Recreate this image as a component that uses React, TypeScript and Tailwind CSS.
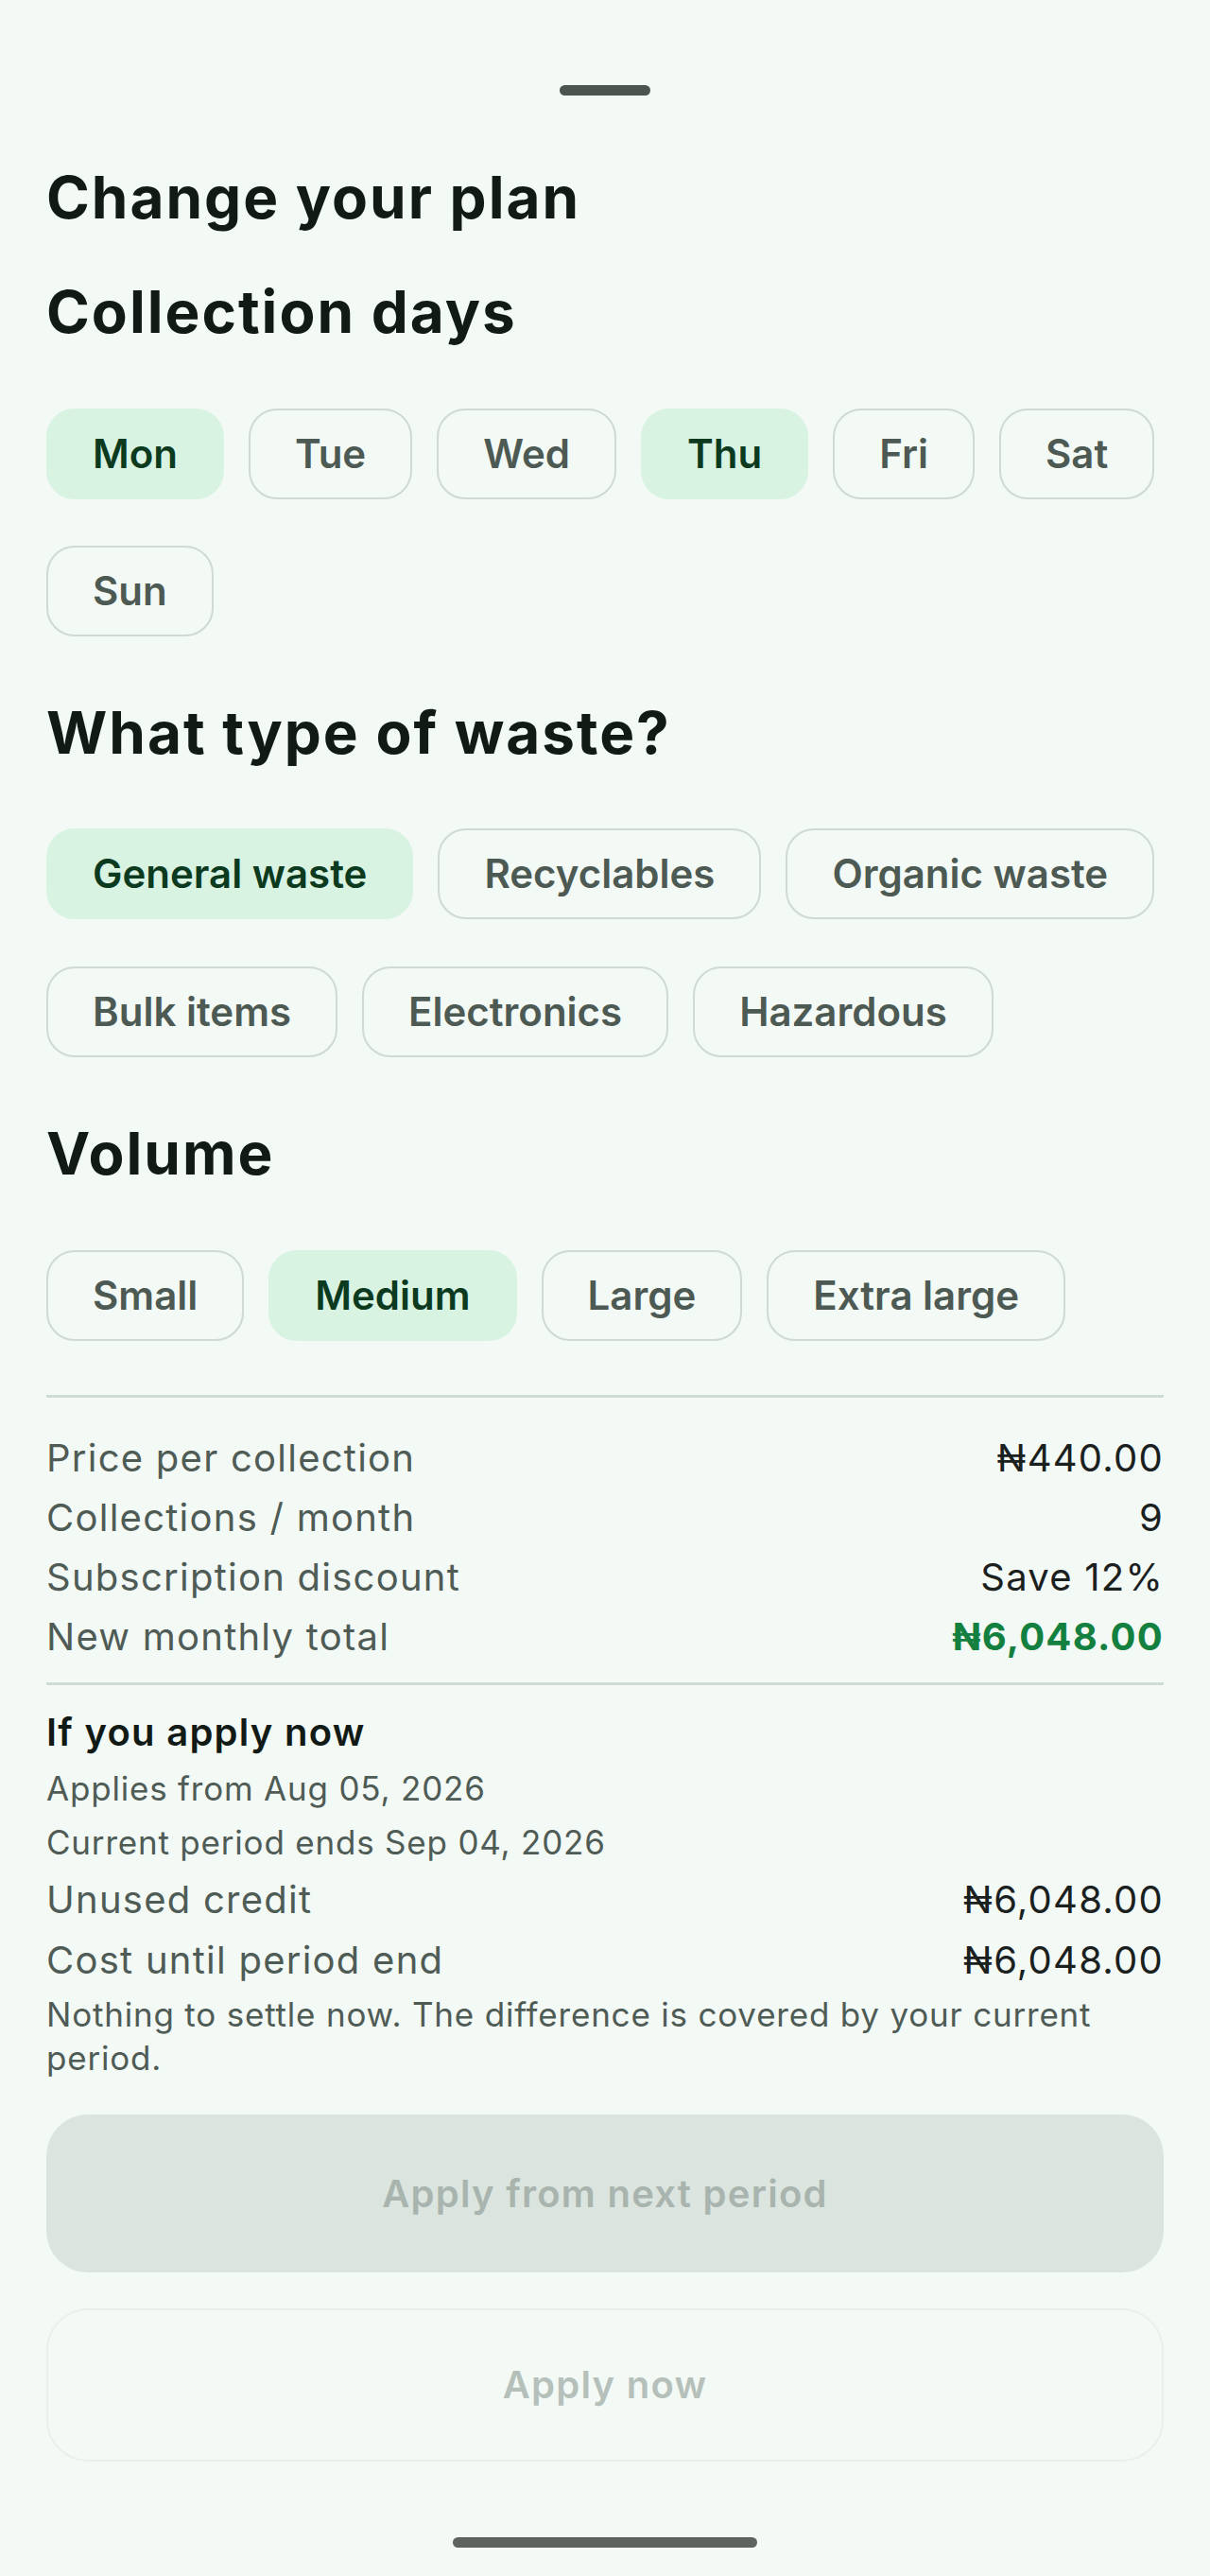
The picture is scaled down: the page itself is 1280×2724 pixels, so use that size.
import React, { useState } from 'react';

const DAYS = ['Mon', 'Tue', 'Wed', 'Thu', 'Fri', 'Sat', 'Sun'];
const WASTE = ['General waste', 'Recyclables', 'Organic waste', 'Bulk items', 'Electronics', 'Hazardous'];
const VOLUMES = ['Small', 'Medium', 'Large', 'Extra large'];

function Chip({ label, selected, onClick }: { label: string; selected: boolean; onClick: () => void }) {
  return (
    <button
      onClick={onClick}
      className={
        selected
          ? 'h-[96px] px-[47px] rounded-[30px] border-2 border-[#d9f3e3] bg-[#d9f3e3] text-[#0b3a1f] text-[42px] font-semibold leading-none flex items-center'
          : 'h-[96px] px-[47px] rounded-[30px] border-2 border-[#cfdad4] bg-transparent text-[#4d5953] text-[42px] font-semibold leading-none flex items-center'
      }
    >
      {label}
    </button>
  );
}

function Row({ label, value, strong = false }: { label: string; value: string; strong?: boolean }) {
  return (
    <div className="flex items-center justify-between text-[40px] leading-[63px] tracking-[1.25px]">
      <span className="text-[#4f5b55]">{label}</span>
      <span className={strong ? 'text-[#14803f] font-bold' : 'text-[#1a201d]'}>{value}</span>
    </div>
  );
}

export default function App() {
  const [days, setDays] = useState<string[]>(['Mon', 'Thu']);
  const [waste, setWaste] = useState<string[]>(['General waste']);
  const [volume, setVolume] = useState('Medium');

  const toggle = (list: string[], set: (v: string[]) => void, item: string) => {
    set(list.includes(item) ? list.filter(i => i !== item) : [...list, item]);
  };

  return (
    <div className="min-h-[2724px] bg-[#f3f9f5] px-[49px] flex flex-col" style={{ fontFamily: 'Inter, "Noto Sans", sans-serif' }}>
      {/* sheet handle */}
      <div className="mt-[90px] mx-auto w-[96px] h-[11px] rounded-full bg-[#4b544f]" />

      <h1 className="mt-[71px] text-[62px] leading-[74px] font-bold tracking-[2px] text-[#111a15]">Change your plan</h1>

      <h2 className="mt-[47px] text-[62px] leading-[74px] font-bold tracking-[2px] text-[#111a15]">Collection days</h2>
      <div className="mt-[65px] flex flex-wrap gap-x-[26px] gap-y-[49px]">
        {DAYS.map(d => (
          <Chip key={d} label={d} selected={days.includes(d)} onClick={() => toggle(days, setDays, d)} />
        ))}
      </div>

      <h2 className="mt-[65px] text-[62px] leading-[74px] font-bold tracking-[2px] text-[#111a15]">What type of waste?</h2>
      <div className="mt-[64px] flex flex-wrap gap-x-[26px] gap-y-[50px]">
        {WASTE.map(w => (
          <Chip key={w} label={w} selected={waste.includes(w)} onClick={() => toggle(waste, setWaste, w)} />
        ))}
      </div>

      <h2 className="mt-[65px] text-[62px] leading-[74px] font-bold tracking-[2px] text-[#111a15]">Volume</h2>
      <div className="mt-[65px] flex flex-wrap gap-x-[26px] gap-y-[49px]">
        {VOLUMES.map(v => (
          <Chip key={v} label={v} selected={volume === v} onClick={() => setVolume(v)} />
        ))}
      </div>

      <div className="mt-[57px] h-[3px] bg-[#cfdcd6]" />

      <div className="mt-[32px]">
        <Row label="Price per collection" value="₦440.00" />
        <Row label="Collections / month" value="9" />
        <Row label="Subscription discount" value="Save 12%" />
        <Row label="New monthly total" value="₦6,048.00" strong />
      </div>

      <div className="mt-[17px] h-[3px] bg-[#cfdcd6]" />

      <div className="mt-[24px] text-[40px] leading-[52px] font-semibold tracking-[1.25px] text-[#121a15]">If you apply now</div>
      <div className="mt-[5px] text-[35px] leading-[57px] tracking-[0.8px] text-[#4f5b55]">
        <div>Applies from Aug 05, 2026</div>
        <div>Current period ends Sep 04, 2026</div>
      </div>
      <div className="text-[40px] leading-[64px] tracking-[1.25px]">
        <div className="flex items-center justify-between">
          <span className="text-[#4f5b55]">Unused credit</span>
          <span className="text-[#1a201d]">₦6,048.00</span>
        </div>
        <div className="flex items-center justify-between">
          <span className="text-[#4f5b55]">Cost until period end</span>
          <span className="text-[#1a201d]">₦6,048.00</span>
        </div>
      </div>
      <p className="mt-[2px] text-[35px] leading-[46px] tracking-[0.8px] text-[#4f5b55]">
        Nothing to settle now. The difference is covered by your current period.
      </p>

      <button disabled className="mt-[37px] h-[167px] w-full rounded-[44px] bg-[#dbe4df] text-[#a8b4ad] text-[40px] font-semibold tracking-[1.25px]">
        Apply from next period
      </button>

      <button disabled className="mt-[38px] h-[162px] w-full rounded-[44px] border-2 border-[#e9f0ec] bg-transparent text-[#b5c0ba] text-[40px] font-semibold tracking-[1.25px]">
        Apply now
      </button>

      {/* home indicator */}
      <div className="mt-[80px] mx-auto w-[322px] h-[11px] rounded-full bg-[#5f635f]" />
      <div className="h-[31px]" />
    </div>
  );
}
